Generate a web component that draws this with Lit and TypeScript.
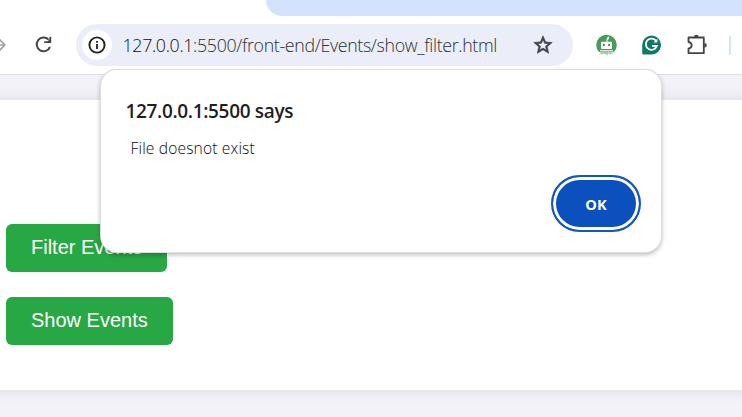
import { LitElement, html, css } from "lit";
import { customElement, property } from "lit/decorators.js";

@customElement("browser-toolbar")
class BrowserToolbar extends LitElement {
  @property() url = "";

  static styles = css`
    :host { display: block; height: 74px; background: #fff; border-bottom: 1px solid #dfdfe3; }
    .tabs { height: 16px; margin-left: 266px; background: #d3e3fd; border-bottom-left-radius: 16px; }
    .row { display: flex; align-items: center; height: 42px; margin-top: 8px; }
    svg { display: block; flex: none; }
    .reload { margin-left: 27px; }
    .pill {
      display: flex; align-items: center; box-sizing: border-box; flex: none;
      width: 497px; height: 42px; margin-left: 16px; padding: 0 19px 0 6px;
      border-radius: 21px; background: #ebeef8;
    }
    .info {
      display: flex; align-items: center; justify-content: center;
      width: 30px; height: 30px; border-radius: 50%; background: #fff;
    }
    .url {
      flex: 1; margin-left: 10.5px; white-space: nowrap; color: #2c2e32;
      font: 300 17.8px/24px "Open Sans", "Noto Sans", sans-serif; letter-spacing: -0.335px;
    }
    .host { color: #0c0e12; }
    .bot { margin-left: 23px; }
    .gram { margin-left: 25px; }
    .puzzle { margin-left: 26px; }
    .divider { flex: none; width: 2px; height: 19px; margin-left: 21px; background: #d3e3fd; }
  `;

  render() {
    const [host, ...path] = this.url.split(":");
    return html`
      <div class="tabs"></div>
      <div class="row">
        <svg width="8" height="20" viewBox="0 0 8 20" fill="none" stroke="#a3a3a3" stroke-width="1.7">
          <path d="M0 10H4M-1 4L4.8 10L-1 16" />
        </svg>
        <svg class="reload" width="25" height="24" viewBox="0 0 25 24">
          <path d="M13.6 6.6A6.9 6.9 0 1 0 15 14" fill="none" stroke="#454545" stroke-width="2" />
          <path d="M16.2 3.8V10H9.2V8.2H12.6L14.4 6.4V3.8Z" fill="#454545" />
        </svg>
        <div class="pill">
          <div class="info">
            <svg width="18" height="18" viewBox="0 0 18 18">
              <circle cx="9" cy="9" r="7.6" fill="none" stroke="#202124" stroke-width="1.9" />
              <path d="M8.1 8H9.9V13H8.1ZM8.1 4.9H9.9V6.7H8.1Z" fill="#202124" />
            </svg>
          </div>
          <div class="url"><span class="host">${host}</span>:${path.join(":")}</div>
          <svg width="22" height="22" viewBox="0 0 24 24" fill="#3f4043" stroke="#3f4043" stroke-width=".7">
            <path d="M22 9.24l-7.19-.62L12 2 9.19 8.63 2 9.24l5.46 4.73L5.82 21 12 17.27 18.18 21l-1.63-7.03L22 9.24zM12 15.4l-3.76 2.27 1-4.28-3.32-2.88 4.38-.38L12 6.1l1.71 4.04 4.38.38-3.32 2.88 1 4.28L12 15.4z" />
          </svg>
        </div>
        <svg class="bot" width="21" height="22" viewBox="0 0 21 22">
          <circle cx="10.5" cy="11" r="10.3" fill="#4a9c59" />
          <path d="M10.5 8V5.5Q10.6 3 13 2.3Q13.5 5 11.5 6V8Z" fill="#fff" />
          <rect x="5" y="7.7" width="11" height="7.2" rx="1" fill="#fff" />
          <rect x="7" y="10" width="1.7" height="2" fill="#397f4a" />
          <rect x="12.3" y="10" width="1.7" height="2" fill="#397f4a" />
          <path d="M4 16H17V17.5H4Z" fill="#d8eadb" />
          <path d="M3 18H18V22H3Z" fill="#fff" />
          <path d="M4 19H17M6 18V20.5M9 18V20.5M11 18V21.5M14 18V20.5" stroke="#73ad7c" stroke-width=".8" />
        </svg>
        <svg class="gram" width="19" height="20" viewBox="0 0 19 20">
          <path d="M9.5.5A9.4 9.4 0 1 1 9.5 19.5H1.2Q.2 19.5.2 18.5V10A9.4 9.4 0 0 1 9.5.5Z" fill="#117865" />
          <path d="M14.1 6.1A5.6 5.6 0 1 0 14.8 11H10.2" fill="none" stroke="#fff" stroke-width="1.8" />
          <path d="M15.4 3.6V7.6H11.6Z" fill="#fff" />
        </svg>
        <svg class="puzzle" width="21" height="22" viewBox="0 0 21 22">
          <path d="M1.5 3.5H16.8V19.2H1.5V14.6Q4.7 14 4.7 11.3T1.5 8Z" fill="none" stroke="#454545" stroke-width="1.8" stroke-linejoin="round" />
          <path d="M7 3A2.3 2.3 0 0 1 11.6 3ZM17.4 8.9A2.4 2.4 0 0 1 17.4 13.7Z" fill="#454545" />
        </svg>
        <div class="divider"></div>
      </div>
    `;
  }
}

@customElement("alert-dialog")
class AlertDialog extends LitElement {
  @property() origin = "";
  @property() message = "";

  static styles = css`
    :host {
      display: block; box-sizing: border-box; width: 560px; height: 182px; padding: 28px 20px 0 24.5px;
      border-radius: 16px; background: #fff; box-shadow: 0 0 0 1px #dedee1, 0 2px 4px 1px rgba(0, 0, 0, .25);
      font-family: "Open Sans", "Noto Sans", sans-serif;
    }
    .title { font-size: 19px; line-height: 26px; font-weight: 600; letter-spacing: -0.34px; color: #1f1f1f; white-space: nowrap; }
    .message { margin: 13px 0 0 5px; font-size: 15.6px; line-height: 22px; font-weight: 300; letter-spacing: .15px; color: #08080c; white-space: nowrap; }
    .actions { display: flex; justify-content: flex-end; margin-top: 16px; }
    .ok {
      box-sizing: border-box; width: 90px; height: 57px; padding: 0; border: 2.5px solid #1256c4; border-radius: 29px;
      background: #0b50bd; box-shadow: inset 0 0 0 3px #fff; color: #fff; font: 700 14.6px/20px "Open Sans", sans-serif;
    }
  `;

  render() {
    return html`
      <div class="title">${this.origin} says</div>
      <div class="message">${this.message}</div>
      <div class="actions"><button class="ok">OK</button></div>
    `;
  }
}

@customElement("app-root")
class AppRoot extends LitElement {
  static styles = css`
    :host { display: block; position: relative; height: 417px; overflow: hidden; background: #f3f2f9; }
    .viewport { height: 342px; overflow: hidden; }
    .card {
      display: flex; flex-direction: column; align-items: flex-start; gap: 25px; box-sizing: border-box;
      height: 290px; margin: 25px -20px 0; padding: 124px 26px 0; background: #fff; box-shadow: 0 0 14px rgba(0, 0, 0, .1);
    }
    .action {
      height: 48px; padding: 0 25px 2px; border: 0; border-radius: 6px; background: #28a745; color: #fff;
      font: 20px/23px "Liberation Sans", Arial, sans-serif;
    }
    alert-dialog { position: absolute; left: 101px; top: 70px; }
  `;

  render() {
    return html`
      <browser-toolbar url="127.0.0.1:5500/front-end/Events/show_filter.html"></browser-toolbar>
      <div class="viewport">
        <div class="card">
          ${["Filter Events", "Show Events"].map((label) => html`<button class="action">${label}</button>`)}
        </div>
      </div>
      <alert-dialog origin="127.0.0.1:5500" message="File doesnot exist"></alert-dialog>
    `;
  }
}
